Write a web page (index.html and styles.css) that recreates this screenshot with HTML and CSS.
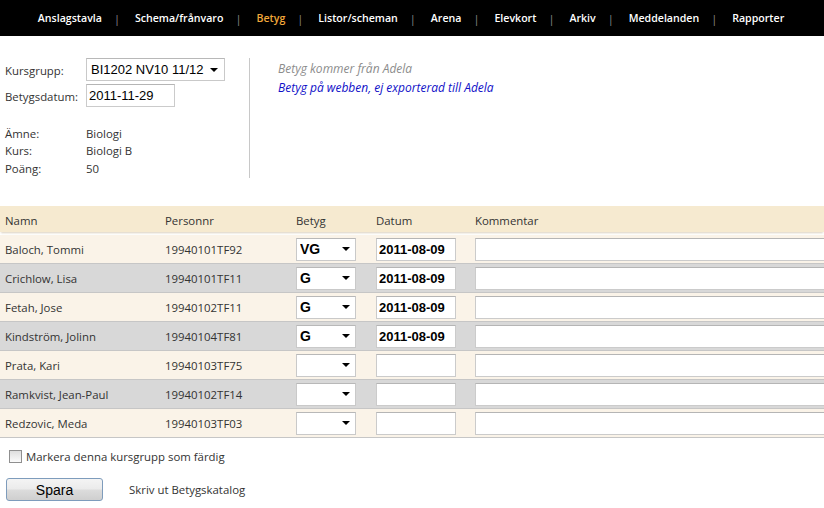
FILE: index.html
```html
<!DOCTYPE html>
<html lang="sv">
<head>
<meta charset="utf-8">
<title>Betyg</title>
<link rel="stylesheet" href="styles.css">
</head>
<body>
<nav class="topnav">
  <a class="nav-item">Anslagstavla</a><span class="sep">|</span>
  <a class="nav-item">Schema/frånvaro</a><span class="sep">|</span>
  <a class="nav-item active">Betyg</a><span class="sep">|</span>
  <a class="nav-item">Listor/scheman</a><span class="sep">|</span>
  <a class="nav-item">Arena</a><span class="sep">|</span>
  <a class="nav-item">Elevkort</a><span class="sep">|</span>
  <a class="nav-item">Arkiv</a><span class="sep">|</span>
  <a class="nav-item">Meddelanden</a><span class="sep">|</span>
  <a class="nav-item">Rapporter</a>
</nav>

<section class="top">
  <div class="left">
    <div class="form-row">
      <label class="lbl">Kursgrupp:</label>
      <span class="sel-wrap sel-course"><select class="sel"><option>BI1202 NV10 11/12</option></select></span>
    </div>
    <div class="form-row">
      <label class="lbl">Betygsdatum:</label>
      <input class="inp inp-date-top" type="text" value="2011-11-29">
    </div>
    <div class="info">
      <div class="info-row"><span class="lbl">Ämne:</span><span>Biologi</span></div>
      <div class="info-row"><span class="lbl">Kurs:</span><span>Biologi B</span></div>
      <div class="info-row"><span class="lbl">Poäng:</span><span>50</span></div>
    </div>
  </div>
  <div class="right">
    <div class="note grey">Betyg kommer från Adela</div>
    <div class="note blue">Betyg på webben, ej exporterad till Adela</div>
  </div>
</section>

<div class="table-wrap">
  <div class="grid head">
    <div class="c c-name">Namn</div>
    <div class="c c-pnr">Personnr</div>
    <div class="c c-grade">Betyg</div>
    <div class="c c-date">Datum</div>
    <div class="c c-com">Kommentar</div>
  </div>

  <div class="grid row odd first">
    <div class="c c-name">Baloch, Tommi</div>
    <div class="c c-pnr">19940101TF92</div>
    <div class="c c-grade"><span class="sel-wrap sel-grade"><select class="sel bold"><option>VG</option></select></span></div>
    <div class="c c-date"><input class="inp inp-date bold" type="text" value="2011-08-09"></div>
    <div class="c c-com"><input class="inp inp-com" type="text"></div>
  </div>
  <div class="grid row even">
    <div class="c c-name">Crichlow, Lisa</div>
    <div class="c c-pnr">19940101TF11</div>
    <div class="c c-grade"><span class="sel-wrap sel-grade"><select class="sel bold"><option>G</option></select></span></div>
    <div class="c c-date"><input class="inp inp-date bold" type="text" value="2011-08-09"></div>
    <div class="c c-com"><input class="inp inp-com" type="text"></div>
  </div>
  <div class="grid row odd">
    <div class="c c-name">Fetah, Jose</div>
    <div class="c c-pnr">19940102TF11</div>
    <div class="c c-grade"><span class="sel-wrap sel-grade"><select class="sel bold"><option>G</option></select></span></div>
    <div class="c c-date"><input class="inp inp-date bold" type="text" value="2011-08-09"></div>
    <div class="c c-com"><input class="inp inp-com" type="text"></div>
  </div>
  <div class="grid row even">
    <div class="c c-name">Kindström, Jolinn</div>
    <div class="c c-pnr">19940104TF81</div>
    <div class="c c-grade"><span class="sel-wrap sel-grade"><select class="sel bold"><option>G</option></select></span></div>
    <div class="c c-date"><input class="inp inp-date bold" type="text" value="2011-08-09"></div>
    <div class="c c-com"><input class="inp inp-com" type="text"></div>
  </div>
  <div class="grid row odd">
    <div class="c c-name">Prata, Kari</div>
    <div class="c c-pnr">19940103TF75</div>
    <div class="c c-grade"><span class="sel-wrap sel-grade"><select class="sel bold"><option></option></select></span></div>
    <div class="c c-date"><input class="inp inp-date bold" type="text"></div>
    <div class="c c-com"><input class="inp inp-com" type="text"></div>
  </div>
  <div class="grid row even">
    <div class="c c-name">Ramkvist, Jean-Paul</div>
    <div class="c c-pnr">19940102TF14</div>
    <div class="c c-grade"><span class="sel-wrap sel-grade"><select class="sel bold"><option></option></select></span></div>
    <div class="c c-date"><input class="inp inp-date bold" type="text"></div>
    <div class="c c-com"><input class="inp inp-com" type="text"></div>
  </div>
  <div class="grid row odd">
    <div class="c c-name">Redzovic, Meda</div>
    <div class="c c-pnr">19940103TF03</div>
    <div class="c c-grade"><span class="sel-wrap sel-grade"><select class="sel bold"><option></option></select></span></div>
    <div class="c c-date"><input class="inp inp-date bold" type="text"></div>
    <div class="c c-com"><input class="inp inp-com" type="text"></div>
  </div>
</div>

<div class="done-row">
  <label class="chk-label"><span class="chk"></span>Markera denna kursgrupp som färdig</label>
</div>
<div class="actions">
  <button class="btn" type="button">Spara</button>
  <a class="print-link">Skriv ut Betygskatalog</a>
</div>
</body>
</html>
```
FILE: styles.css
```css
html, body {
  margin: 0;
  padding: 0;
  background: #fff;
  overflow: hidden;
}
body {
  font-family: "Open Sans", "Noto Sans", sans-serif;
  font-size: 11.4px;
  color: #333;
  width: 824px;
  height: 508px;
}

/* Navigation */
.topnav {
  height: 36px;
  background: #000;
  display: flex;
  align-items: center;
  justify-content: center;
  padding-right: 2px;
}
.nav-item {
  color: #fff;
  font-size: 10.6px;
  font-weight: 600;
  cursor: pointer;
}
.nav-item.active {
  color: #f0a83a;
}
.sep {
  color: #8a8a8a;
  font-size: 11px;
  margin: 0 15px 0 12px;
}

/* Top section */
.top {
  display: flex;
  padding: 22px 0 0 0;
  height: 148px;
}
.left {
  width: 244px;
  padding-left: 5px;
  border-right: 1px solid #c8c8c8;
  height: 120px;
}
.form-row {
  display: flex;
  align-items: center;
  height: 23px;
  margin-bottom: 3px;
}
.form-row .lbl {
  padding-top: 2px;
}
.lbl {
  width: 81px;
  flex: none;
}
.info {
  margin-top: 18px;
}
.info-row {
  display: flex;
  height: 17.3px;
  line-height: 17.3px;
}
.right {
  padding-left: 28px;
  padding-top: 1px;
}
.note {
  font-style: italic;
  font-size: 12px;
  line-height: 19px;
}
.note.grey { color: #8c8c8c; }
.note.blue { color: #1010c8; }

/* Controls */
.sel-wrap {
  position: relative;
  display: inline-block;
}
.sel-wrap::after {
  content: "";
  position: absolute;
  top: 50%;
  margin-top: -2px;
  border-left: 4px solid transparent;
  border-right: 4px solid transparent;
  border-top: 4px solid #000;
  pointer-events: none;
}
.sel {
  -webkit-appearance: none;
  appearance: none;
  font-family: "Liberation Sans", Arial, sans-serif;
  font-size: 13px;
  color: #000;
  background: #fff;
  border: 1px solid #c9c9c9;
  border-top-color: #b8b8b8;
  border-radius: 0;
  margin: 0;
  box-sizing: border-box;
  outline: none;
}
.sel-course .sel {
  width: 139px;
  height: 23px;
  padding: 0 0 0 4px;
}
.sel-course::after { right: 7px; }
.sel-grade .sel {
  width: 60px;
  height: 23px;
  padding: 0 0 0 3px;
  font-size: 14px;
}
.sel-grade::after { right: 6px; }
.bold { font-weight: bold; }

.inp {
  font-family: "Liberation Sans", Arial, sans-serif;
  font-size: 13px;
  color: #000;
  background: #fff;
  border: 1px solid #cbcbcb;
  border-top-color: #b5b5b5;
  box-sizing: border-box;
  height: 23px;
  margin: 0;
  padding: 0 3px;
  outline: none;
}
.inp-date-top { width: 89px; padding-left: 2px; }
.inp-date { width: 80px; padding-left: 2px; }
.inp-com { width: 400px; }

/* Table */
.table-wrap {
  width: 824px;
  overflow: hidden;
}
.grid {
  display: grid;
  grid-template-columns: 160px 131px 80px 99px 1fr;
  align-items: center;
}
.head {
  height: 26px;
  background: #f6ead0;
  box-shadow: 0 2px 2px -1px rgba(150, 120, 70, 0.35);
  position: relative;
}
.head .c { padding-top: 3px; }
.row {
  height: 28px;
  border-bottom: 1px solid #c6c6c6;
}
.row.odd { background: #faf3e8; }
.row.even { background: #d8d8d8; }
.row.first { margin-top: 3px; }
.c { white-space: nowrap; }
.c-name { padding-left: 5px; }
.c-pnr { padding-left: 5px; }
.c-grade { padding-left: 5px; display: flex; }
.c-date { padding-left: 5px; display: flex; }
.c-com { padding-left: 5px; display: flex; }

/* Bottom */
.done-row {
  padding: 11px 0 0 9px;
  height: 21px;
}
.chk-label {
  display: flex;
  align-items: center;
  font-size: 11.4px;
}
.chk {
  width: 11px;
  height: 11px;
  border: 1px solid #8f8f8f;
  background: linear-gradient(#dedede, #fbfbfb);
  margin-right: 4px;
}
.actions {
  display: flex;
  align-items: center;
  padding: 8px 0 0 6px;
}
.btn {
  width: 97px;
  height: 23px;
  font-family: "Liberation Sans", Arial, sans-serif;
  font-size: 14px;
  color: #000;
  border: 1px solid #7e9cbc;
  border-radius: 3px;
  background: linear-gradient(#f4f4f4 0%, #ebebeb 48%, #dcdcdc 52%, #cfcfcf 100%);
  padding: 0;
  margin: 0;
}
.print-link {
  margin-left: 26px;
  font-size: 11.4px;
  color: #333;
  cursor: pointer;
}
```
